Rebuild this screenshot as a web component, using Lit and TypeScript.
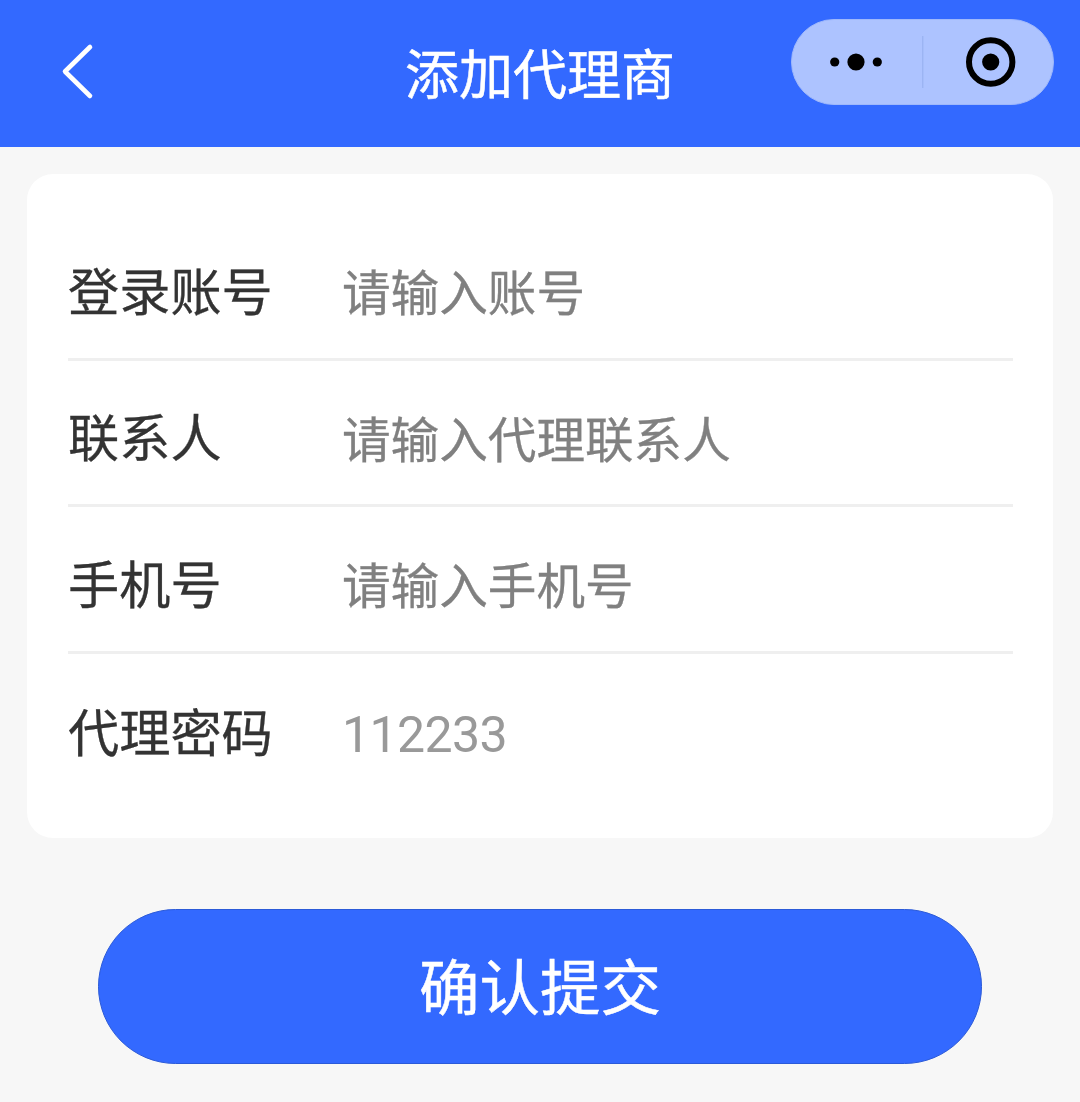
import { LitElement, html, css } from "lit";
import { customElement } from "lit/decorators.js";

const rows = [
  { label: "登录账号", text: "请输入账号", kind: "ph" },
  { label: "联系人", text: "请输入代理联系人", kind: "ph" },
  { label: "手机号", text: "请输入手机号", kind: "ph" },
  { label: "代理密码", text: "112233", kind: "val" },
];

@customElement("app-root")
export class AppRoot extends LitElement {
  static styles = css`
    :host {
      display: block;
      width: 1080px;
      height: 1102px;
      background: #f7f7f7;
      overflow: hidden;
      font-family: "Noto Sans CJK SC", Roboto, sans-serif;
    }
    .nav {
      height: 147px;
      background: #3369ff;
      display: grid;
      grid-template-columns: 1fr auto 1fr;
      align-items: start;
    }
    .back {
      display: block;
      margin: 42px 0 0 60px;
    }
    .title {
      color: #fff;
      font-size: 54px;
      line-height: 60px;
      margin-top: 42px;
      white-space: nowrap;
      -webkit-text-stroke: 0.5px #fff;
    }
    .pill {
      justify-self: end;
      margin: 19px 26px 0 0;
      display: block;
      width: 263px;
      height: 86px;
    }
    .card {
      margin: 27px 27px 0;
      height: 664px;
      box-sizing: border-box;
      padding: 40px 40px 0 41px;
      background: #fff;
      border-radius: 26px;
    }
    .row {
      height: 146.5px;
      box-sizing: border-box;
      display: flex;
      align-items: center;
      border-bottom: 3px solid #efefef;
    }
    .row:last-child {
      border-bottom: 0;
    }
    .label {
      width: 274px;
      flex: none;
      font-size: 51.2px;
      line-height: 60px;
      padding-top: 6px;
      color: #333;
      white-space: nowrap;
      -webkit-text-stroke: 0.3px #333;
    }
    .ph {
      font-size: 48.6px;
      line-height: 60px;
      padding-top: 9px;
      color: #808080;
      white-space: nowrap;
      -webkit-text-stroke: 0.3px #808080;
    }
    .val {
      font-family: Roboto, sans-serif;
      font-size: 50px;
      letter-spacing: -0.6px;
      line-height: 60px;
      padding-top: 16px;
      color: #999;
    }
    .submit {
      display: block;
      box-sizing: border-box;
      width: 884px;
      height: 155px;
      margin: 71px auto 0;
      padding: 0 0 6px;
      border: 1px solid #2b5ad8;
      border-radius: 78px;
      background: #3369ff;
      color: #fff;
      font-family: inherit;
      font-size: 60.5px;
      line-height: 147px;
      text-align: center;
      -webkit-text-stroke: 0.5px #fff;
    }
  `;

  render() {
    return html`
      <header class="nav">
        <svg class="back" width="36" height="60" viewBox="0 0 36 60" aria-hidden="true">
          <path d="M30 5 L5 29.5 L30 54" fill="none" stroke="#fff" stroke-width="4.6" stroke-linecap="round" stroke-linejoin="round"/>
        </svg>
        <div class="title">添加代理商</div>
        <svg class="pill" viewBox="0 0 263 86" aria-hidden="true">
          <rect x="0.5" y="0.5" width="262" height="85" rx="42.5" fill="#adc3ff" stroke="#9fb8fb"/>
          <circle cx="43.7" cy="43" r="4.6" fill="#000"/>
          <circle cx="65" cy="43" r="8.6" fill="#000"/>
          <circle cx="86.3" cy="43" r="4.6" fill="#000"/>
          <rect x="131.3" y="17" width="1" height="52" fill="#94aeee"/>
          <circle cx="199.7" cy="43" r="21.7" fill="none" stroke="#000" stroke-width="6"/>
          <circle cx="199.7" cy="43" r="8.6" fill="#000"/>
        </svg>
      </header>
      <section class="card">
        ${rows.map(
          (r) => html`
            <div class="row">
              <div class="label">${r.label}</div>
              <div class=${r.kind}>${r.text}</div>
            </div>
          `
        )}
      </section>
      <button class="submit">确认提交</button>
    `;
  }
}
